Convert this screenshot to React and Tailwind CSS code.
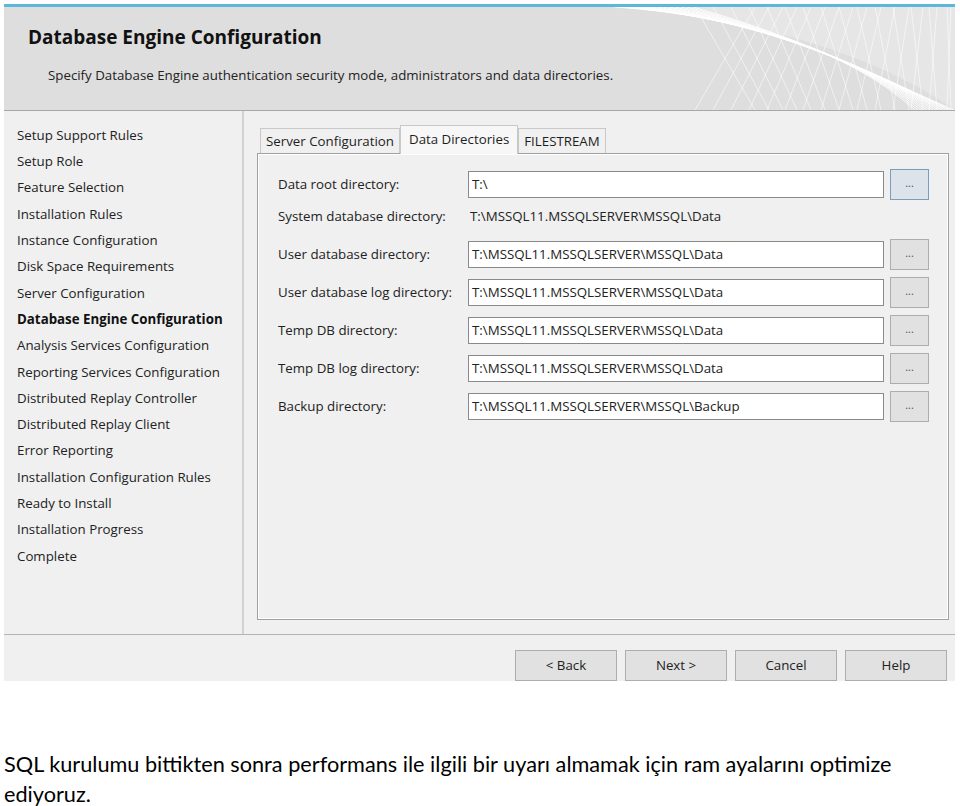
import React from "react";

const steps = [
	"Setup Support Rules",
	"Setup Role",
	"Feature Selection",
	"Installation Rules",
	"Instance Configuration",
	"Disk Space Requirements",
	"Server Configuration",
	"Database Engine Configuration",
	"Analysis Services Configuration",
	"Reporting Services Configuration",
	"Distributed Replay Controller",
	"Distributed Replay Client",
	"Error Reporting",
	"Installation Configuration Rules",
	"Ready to Install",
	"Installation Progress",
	"Complete",
];

const dirs = [
	{ label: "User database directory:", value: "T:\\MSSQL11.MSSQLSERVER\\MSSQL\\Data" },
	{ label: "User database log directory:", value: "T:\\MSSQL11.MSSQLSERVER\\MSSQL\\Data" },
	{ label: "Temp DB directory:", value: "T:\\MSSQL11.MSSQLSERVER\\MSSQL\\Data" },
	{ label: "Temp DB log directory:", value: "T:\\MSSQL11.MSSQLSERVER\\MSSQL\\Data" },
	{ label: "Backup directory:", value: "T:\\MSSQL11.MSSQLSERVER\\MSSQL\\Backup" },
];

const Mesh = () => (
	<svg className="absolute right-0 top-0" width="340" height="103" viewBox="0 0 340 103">
		<path d="M0 0 C120 10 250 40 340 103 L340 0 Z" fill="#e6e6e6" />
		{Array.from({ length: 14 }).map((_, i) => (
			<path
				key={"a" + i}
				d={`M${i * 6} 0 C${120 + i * 6} ${8 + i * 2} ${230 + i * 4} ${40 + i * 3} ${300 + i * 3} 103`}
				stroke="#ffffff"
				strokeWidth="1"
				fill="none"
				opacity="0.9"
			/>
		))}
		{Array.from({ length: 16 }).map((_, i) => (
			<path
				key={"b" + i}
				d={`M${80 + i * 18} 0 L${140 + i * 14} 103`}
				stroke="#ffffff"
				strokeWidth="0.8"
				fill="none"
				opacity="0.7"
			/>
		))}
		{Array.from({ length: 16 }).map((_, i) => (
			<path
				key={"c" + i}
				d={`M${140 + i * 14} 0 L${80 + i * 18} 103`}
				stroke="#ffffff"
				strokeWidth="0.8"
				fill="none"
				opacity="0.7"
			/>
		))}
	</svg>
);

const Browse = ({ focused }) => (
	<button
		className={`w-[39px] h-[31px] border text-[11px] leading-none text-[#555] pb-1 ${
			focused ? "border-[#7a9cbf] bg-[#dde3ea]" : "border-[#adadad] bg-[#e1e1e1]"
		}`}
	>
		...
	</button>
);

const App = () => {
	return (
		<div className="bg-white w-[960px] h-[806px] pt-1 pl-1" style={{ fontFamily: "'Open Sans', sans-serif" }}>
			<div className="w-[951px] h-[677px] bg-[#f0f0f0] flex flex-col text-[#1e1e1e]">
				<div className="h-[3px] bg-[#5bb8d8]" />
				{/* header */}
				<div className="relative h-[104px] bg-[#dedede] border-b border-[#a8a8a8] overflow-hidden">
					<Mesh />
					<div className="relative pl-6 pt-[15px]">
						<h1 className="text-[19px] font-bold leading-[30px] text-[#111]">Database Engine Configuration</h1>
						<p className="pl-5 mt-[13px] text-[13.3px] leading-[20px] text-[#222]">
							Specify Database Engine authentication security mode, administrators and data directories.
						</p>
					</div>
				</div>
				{/* body */}
				<div className="flex h-[525px] border-b border-[#b4b4b4]">
					<div className="w-[240px] border-r-2 border-[#d2d2d2] pl-[13px] pt-[11px]">
						{steps.map((s, i) => (
							<div
								key={s}
								className={`h-[26.3px] text-[13.3px] leading-[26px] whitespace-nowrap ${
									i === 7 ? "font-bold text-[#111]" : "text-[#222]"
								}`}
							>
								{s}
							</div>
						))}
					</div>
					<div className="flex-1 pl-[13px] pr-[6px] pt-[13px] pb-[14px] flex flex-col">
						{/* tabs */}
						<div className="flex items-end h-[29px] pl-[3px]">
							<div className="h-[25px] px-[5px] border border-b-0 border-[#c8c8c8] bg-[#f0f0f0] text-[13.3px] leading-[24px] whitespace-nowrap">
								Server Configuration
							</div>
							<div className="h-[29px] px-[8px] border border-b-0 border-[#c8c8c8] bg-[#f7f7f7] text-[13.3px] leading-[26px] whitespace-nowrap relative top-[1px] z-10">
								Data Directories
							</div>
							<div className="h-[25px] px-[5px] border border-b-0 border-[#c8c8c8] bg-[#f0f0f0] text-[13.3px] leading-[24px] whitespace-nowrap">
								FILESTREAM
							</div>
						</div>
						<div className="flex-1 border border-[#a0a0a0] bg-[#f0f0f0] shadow-[inset_1px_1px_0_#ffffff,inset_-1px_-1px_0_#ffffff]">
							<div className="pl-5 pr-[19px] pt-[15px] text-[13.3px] text-[#222]">
								<div className="flex items-center h-[32px]">
									<span className="w-[190px]">Data root directory:</span>
									<div className="flex-1 h-[27px] bg-white border border-[#8a8a8a] px-[3px] leading-[24px]">T:\</div>
									<div className="ml-[6px]">
										<Browse focused />
									</div>
								</div>
								<div className="flex items-center h-[32px]">
									<span className="w-[192px]">System database directory:</span>
									<span>T:\MSSQL11.MSSQLSERVER\MSSQL\Data</span>
								</div>
								{dirs.map((d, i) => (
									<div key={i} className="flex items-center h-[32px] mt-[6px] first:mt-[5px]">
										<span className="w-[190px] whitespace-nowrap">{d.label}</span>
										<div className="flex-1 h-[27px] bg-white border border-[#8a8a8a] px-[3px] leading-[24px]">{d.value}</div>
										<div className="ml-[6px]">
											<Browse />
										</div>
									</div>
								))}
							</div>
						</div>
					</div>
				</div>
				{/* footer */}
				<div className="flex-1 flex justify-end items-start gap-[8px] pr-2 pt-[15px]">
					{["< Back", "Next >", "Cancel", "Help"].map((b) => (
						<button
							key={b}
							className="w-[102px] h-[31px] border border-[#adadad] bg-[#e1e1e1] text-[13.3px] text-[#222]"
						>
							{b}
						</button>
					))}
				</div>
			</div>
			<div
				className="mt-[68px] text-[21.7px] leading-[30px] text-black pr-2"
				style={{ fontFamily: "Lato, sans-serif" }}
			>
				SQL kurulumu bittikten sonra performans ile ilgili bir uyarı almamak için ram ayalarını optimize ediyoruz.
			</div>
		</div>
	);
};

export default App;
